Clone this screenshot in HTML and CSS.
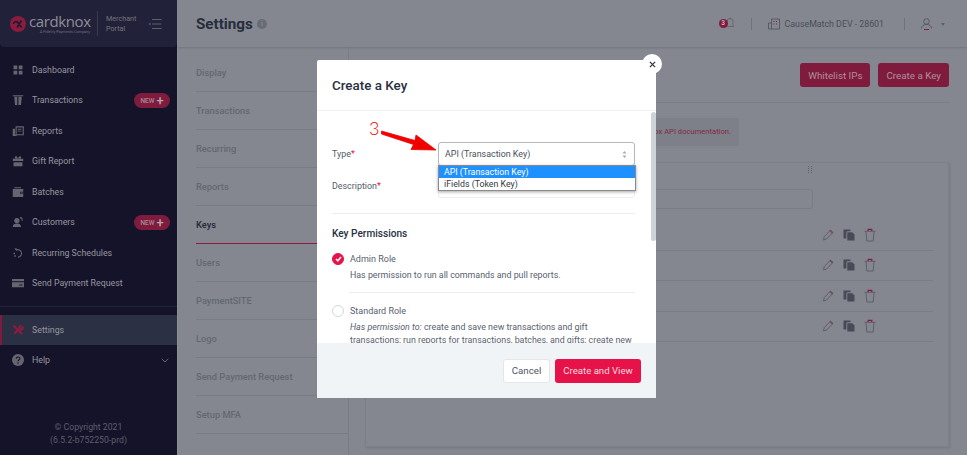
FILE: index.html
```html
<!DOCTYPE html>
<html>
<head>
  <title>Settings - Keys</title>
  <link rel="stylesheet" href="styles.css">
</head>
<body>
  <svg class="defs" width="0" height="0">
    <symbol id="pencil" viewBox="0 0 14 14">
      <path d="M2.500 12l.7-3.300 6.300-6.700 2.500 2.400-6.400 6.600z" fill="none" stroke="#5d606a" stroke-width="1"/>
      <path d="M9.500 2l2.500 2.400-1 1-2.500-2.400z" fill="#7c3048" opacity=".7"/>
    </symbol>
    <symbol id="copy" viewBox="0 0 14 14">
      <path d="M1.500 1.500h7v1.700H5.700a1.300 1.300 0 0 0-1.300 1.300v6H1.500z" fill="#474b58"/>
      <path d="M5.300 4.200h5l2.200 2.200v6.100H5.300z" fill="#474b58"/>
    </symbol>
    <symbol id="trash" viewBox="0 0 14 14">
      <path d="M1.500 3.300h11M3 3.300l.8 9.700h6.400l.8-9.700" fill="none" stroke="#5d606a" stroke-width="1"/>
      <path d="M5.200 3V1.400h3.600V3" fill="none" stroke="#8c1c3e" stroke-width="1.200"/>
    </symbol>
  </svg>

  <div class="app">
    <aside class="sidebar">
      <div class="brand">
        <span class="brand-mark">
          <svg width="16" height="16" viewBox="0 0 16 16">
            <circle cx="8" cy="8" r="8" fill="#8a1c3e"/>
            <path d="M11.500 4.500L7 11.500M3.500 8a2.400 2.400 0 0 1 4.200-1.600L11.500 11.500" fill="none" stroke="#1c1a30" stroke-width="1.700"/>
          </svg>
        </span>
        <div class="brand-name">
          <span class="brand-word">cardknox</span>
          <span class="brand-tag">A Fidelity Payments Company</span>
        </div>
        <div class="brand-portal">Merchant<br>Portal</div>
        <svg class="brand-toggle" width="14" height="12" viewBox="0 0 14 12">
          <path d="M4 1.500h9.500M4 6h9.500M4 10.500h9.500" stroke="#5f5e6e" stroke-width="1.200"/>
          <path d="M2.500 4.500L.5 6l2 1.500z" fill="#5f5e6e"/>
        </svg>
      </div>

      <nav class="nav">
        <a class="nav-item">
          <svg class="nav-icon" viewBox="0 0 16 16"><path d="M2 2h5v5H2zM9 2h5v5H9zM2 9h5v5H2zM9 9h5v5H9z" fill="#65646f"/></svg>
          Dashboard
        </a>
        <a class="nav-item">
          <svg class="nav-icon" viewBox="0 0 16 16"><path d="M1 1.500h14v1.500H1zM3 3.500h4v11H4zM8.500 3.500h4.500l-1 11H8.500z" fill="#65646f"/></svg>
          Transactions
          <span class="new-pill">NEW <b>+</b></span>
        </a>
        <a class="nav-item">
          <svg class="nav-icon" viewBox="0 0 16 16"><path d="M5.500 2.500h9.500v10.500H5.500z" fill="none" stroke="#65646f" stroke-width="1.500"/><path d="M1 5h3v8h2v1.500H1zM7.500 5h5v1.200h-5zM7.500 7.500h5v1.200h-5z" fill="#65646f"/></svg>
          Reports
        </a>
        <a class="nav-item">
          <svg class="nav-icon" viewBox="0 0 16 16"><path d="M1 5h14v3H1zM2 9.500h12V15H2zM4 4.500C3 2 5 1 6.500 2L8 4.500 9.500 2c1.500-1 3.500 0 2.500 2.500z" fill="#65646f"/></svg>
          Gift Report
        </a>
        <a class="nav-item">
          <svg class="nav-icon" viewBox="0 0 16 16"><path d="M3 1.500h9V3H3zM1 4h14v3.500h-4v3h4V14.500H1zM12 8.500h3v1.500h-3z" fill="#65646f"/></svg>
          Batches
        </a>
        <a class="nav-item">
          <svg class="nav-icon" viewBox="0 0 16 16"><circle cx="6.500" cy="6" r="3.500" fill="#65646f"/><path d="M1 14.500c0-3 2-4.500 5.500-4.500s5.500 1.500 5.500 4.500zM10 2.500l2-1.500 2 1.500v4h-1.200V3.500L12 3l-1 .6z" fill="#65646f"/></svg>
          Customers
          <span class="new-pill">NEW <b>+</b></span>
        </a>
        <a class="nav-item">
          <svg class="nav-icon" viewBox="0 0 16 16"><path d="M5.500 4A5 5 0 1 1 8 13.500" fill="none" stroke="#65646f" stroke-width="1.400"/><path d="M3 1.500l3.500.5-.5 3.500zM3 11h2v2H3zM2 7.500h2v2H2z" fill="#65646f"/></svg>
          Recurring Schedules
        </a>
        <a class="nav-item">
          <svg class="nav-icon" viewBox="0 0 16 16"><path d="M0 2.500h16v3H0zM0 7h16v6.500H0z" fill="#65646f"/><path d="M9.500 10h4.500v1.300H9.500z" fill="#15132a"/></svg>
          Send Payment Request
        </a>
      </nav>

      <div class="nav-lower">
        <a class="nav-item active">
          <svg class="nav-icon" viewBox="0 0 16 16"><path d="M3 3l10.500 10.500" stroke="#8a1c3e" stroke-width="3"/><path d="M1 2.500L2.500 1l3 3L4 5.500z" fill="#8a1c3e"/><path d="M3 13l6-6" stroke="#8a1c3e" stroke-width="3"/><path d="M8.500 5a3.500 3.500 0 0 1 5-3.500L11 4l1 1 2.500-2.500A3.500 3.500 0 0 1 10 8z" fill="#8a1c3e"/></svg>
          Settings
        </a>
        <a class="nav-item">
          <svg class="nav-icon help-icon" viewBox="0 0 16 16"><circle cx="8" cy="8" r="8" fill="#65646f"/><path d="M5.500 6.300A2.500 2.500 0 0 1 8 4c1.500 0 2.500 1 2.500 2.200 0 1.600-2.400 1.700-2.400 3.400" fill="none" stroke="#15132a" stroke-width="1.500"/><circle cx="8" cy="12" r="1" fill="#15132a"/></svg>
          Help
          <svg class="help-chevron" width="8" height="5" viewBox="0 0 8 5"><path d="M.7.7L4 4l3.300-3.300" fill="none" stroke="#65646f" stroke-width="1"/></svg>
        </a>
      </div>

      <div class="copyright">© Copyright 2021<br>(6.5.2-b752250-prd)</div>
    </aside>

    <main class="main">
      <header class="topbar">
        <h1 class="page-title">Settings</h1>
        <span class="info-dot">i</span>
        <div class="topbar-right">
          <span class="bell">
            <svg width="8" height="11" viewBox="0 0 8 11"><path d="M1 8.500V4.500a3 3 0 0 1 6 0v4l1 1H0zM3.500 1h1" fill="none" stroke="#5d606a" stroke-width=".8"/></svg>
            <span class="bell-count">3</span>
          </span>
          <span class="top-sep"></span>
          <svg class="building" width="12" height="12" viewBox="0 0 12 12"><path d="M3.500 11V1h8v10zM.5 11V5h3v6z" fill="none" stroke="#565a65" stroke-width="1"/><path d="M5.500 3h1v1h-1zM8 3h1v1H8zM5.500 5.500h1v1h-1zM8 5.500h1v1H8z" fill="#8a1c3e"/></svg>
          <span class="account">CauseMatch DEV - 28601</span>
          <span class="top-sep"></span>
          <svg class="user" width="11" height="12" viewBox="0 0 11 12"><circle cx="5.500" cy="3.500" r="2.800" fill="none" stroke="#565a65" stroke-width="1"/><path d="M.5 10.500c0-5.500 10-5.500 10 0" fill="none" stroke="#565a65" stroke-width="1"/><path d="M3 11.500h5" stroke="#8a1c3e" stroke-width="1"/></svg>
          <span class="caret"></span>
        </div>
      </header>

      <div class="content">
        <ul class="tabs">
          <li>Display</li>
          <li>Transactions</li>
          <li>Recurring</li>
          <li>Reports</li>
          <li class="current">Keys</li>
          <li>Users</li>
          <li>PaymentSITE</li>
          <li>Logo</li>
          <li>Send Payment Request</li>
          <li>Setup MFA</li>
        </ul>

        <section class="pane">
          <div class="pane-actions">
            <button class="btn-dim">Whitelist IPs</button>
            <button class="btn-dim">Create a Key</button>
          </div>
          <div class="notice">For more information about keys, please see the Cardknox API documentation.</div>
          <div class="card">
            <div class="grip"></div>
            <div class="filter"></div>
            <div class="key-row">
              <svg class="row-icon"><use href="#pencil"/></svg><svg class="row-icon"><use href="#copy"/></svg><svg class="row-icon"><use href="#trash"/></svg>
            </div>
            <div class="key-row">
              <svg class="row-icon"><use href="#pencil"/></svg><svg class="row-icon"><use href="#copy"/></svg><svg class="row-icon"><use href="#trash"/></svg>
            </div>
            <div class="key-row">
              <svg class="row-icon"><use href="#pencil"/></svg><svg class="row-icon"><use href="#copy"/></svg><svg class="row-icon"><use href="#trash"/></svg>
            </div>
            <div class="key-row">
              <svg class="row-icon"><use href="#pencil"/></svg><svg class="row-icon"><use href="#copy"/></svg><svg class="row-icon"><use href="#trash"/></svg>
            </div>
          </div>
        </section>
      </div>
    </main>
  </div>

  <div class="modal">
    <button class="modal-close">
      <svg width="7" height="7" viewBox="0 0 8 8"><path d="M1 1l6 6M7 1L1 7" stroke="#2e3a4d" stroke-width="1.500"/></svg>
    </button>
    <h2 class="modal-title">Create a Key</h2>
    <div class="modal-body">
      <div class="field">
        <label>Type<em>*</em></label>
        <div class="select">
          API (Transaction Key)
          <svg width="5" height="9" viewBox="0 0 5 9"><path d="M.5 3.500L2.500 1l2 2.500zM.5 5.500l2 2.500 2-2.500z" fill="#a5abb5"/></svg>
        </div>
      </div>
      <div class="field">
        <label>Description<em>*</em></label>
        <div class="text-input"></div>
      </div>
      <hr class="rule">
      <h3 class="perm-title">Key Permissions</h3>
      <div class="role">
        <span class="radio checked">
          <svg width="7" height="6" viewBox="0 0 7 6"><path d="M1 3l1.800 1.800L6 1" fill="none" stroke="#fff" stroke-width="1.500"/></svg>
        </span>
        <div class="role-text">
          <div class="role-name">Admin Role</div>
          <p>Has permission to run all commands and pull reports.</p>
        </div>
      </div>
      <hr class="rule rule-inset">
      <div class="role">
        <span class="radio"></span>
        <div class="role-text">
          <div class="role-name">Standard Role</div>
          <p><i>Has permission to:</i> create and save new transactions and gift transactions; run reports for transactions, batches, and gifts; create new</p>
        </div>
      </div>
    </div>
    <div class="modal-foot">
      <button class="btn-cancel">Cancel</button>
      <button class="btn-create">Create and View</button>
    </div>
    <span class="modal-scroll"></span>
  </div>

  <ul class="select-list">
    <li class="picked">API (Transaction Key)</li>
    <li>iFields (Token Key)</li>
  </ul>

  <span class="note-num">3</span>
  <svg class="note-arrow" width="60" height="24" viewBox="0 0 60 24">
    <path d="M1.500 2L35 11.500 36 6 56 21 31 20.500 33.500 15.500 1.500 5z" fill="#f00000" stroke="#f00000" stroke-width=".8" stroke-linejoin="round"/>
  </svg>
</body>
</html>
```

FILE: styles.css
```css
* { box-sizing: border-box; }
html, body { height: 100%; }
body { margin: 0; font-family: Roboto, "Liberation Sans", sans-serif; overflow: hidden; background: #84878f; }
.defs { position: absolute; }
button { font-family: inherit; cursor: pointer; }

.app { display: flex; height: 455px; }

/* sidebar */
.sidebar { width: 177px; background: #15132a; color: #9a99a3; display: flex; flex-direction: column; flex-shrink: 0; }
.brand { height: 47px; background: #22213a; border-radius: 0 0 4px 4px; display: flex; align-items: center; padding-left: 10px; }
.brand-mark { display: flex; margin-right: 3px; }
.brand-name { display: flex; flex-direction: column; width: 65px; margin-right: 3px; margin-top: 2px; }
.brand-word { font-family: "Open Sans", sans-serif; font-size: 15px; line-height: 13px; letter-spacing: -.4px; color: #8e8e99; margin-bottom: 2px; }
.brand-tag { font-size: 3.800px; line-height: 4px; color: #6f6f7c; text-align: right; margin-right: 4px; white-space: nowrap; }
.brand-portal { border-left: 1px solid #3b3a50; height: 25px; padding-left: 8px; font-size: 7.200px; line-height: 9.800px; padding-top: 3px; color: #75757f; width: 51px; }

.nav { padding-top: 7.500px; height: 259.500px; border-bottom: 1px solid #25233c; }
.nav-item { display: flex; align-items: center; height: 30.500px; font-size: 8.800px; color: #97969f; padding-left: 12px; position: relative; }
.nav-icon { width: 12px; height: 12px; margin-right: 8px; flex-shrink: 0; }
.new-pill { position: absolute; right: 7px; top: 8px; width: 36px; height: 15px; border-radius: 8px; background: #7f1b3d; color: #a98a98; font-size: 6.500px; font-weight: 500; display: flex; align-items: center; justify-content: center; gap: 2px; }
.new-pill b { font-size: 13px; line-height: 11px; font-weight: 500; color: #b9a2ac; }
.nav-lower { padding-top: 8px; }
.nav-item.active { background: #2c3045; border-left: 2px solid #7f1b3d; padding-left: 10px; height: 30px; }
.help-chevron { position: absolute; right: 8px; top: 13px; }
.copyright { margin-top: auto; padding-bottom: 8px; text-align: center; font-size: 8.700px; line-height: 13px; color: #5e5d6b; }

/* main */
.main { flex: 1; display: flex; flex-direction: column; border-left: 1px solid #8c8f97; }
.topbar { height: 47px; background: #84878f; box-shadow: 0 1px 2px rgba(60, 62, 70, .25); display: flex; align-items: center; padding-left: 18px; padding-right: 22px; }
.page-title { margin: 0; font-size: 15.200px; font-weight: 700; color: #282d3c; }
.info-dot { margin-left: 4px; width: 10px; height: 10px; border-radius: 50%; background: #686c76; color: #84878f; font-size: 7px; font-weight: 700; text-align: center; line-height: 10px; }
.topbar-right { margin-left: auto; display: flex; align-items: center; font-size: 8.800px; color: #4a4e5a; }
.bell { position: relative; width: 15px; height: 13px; display: flex; justify-content: flex-end; margin-right: 17px; }
.bell-count { position: absolute; left: 0; top: 2px; width: 9px; height: 9px; border-radius: 50%; background: #7f1b3d; color: #c5aab4; font-size: 6.500px; font-weight: 700; line-height: 9px; text-align: center; }
.top-sep { width: 1px; height: 12px; background: #70737c; }
.building { margin-left: 16px; margin-right: 5px; }
.account { margin-right: 20px; white-space: nowrap; }
.user { margin-left: 16px; }
.caret { margin-left: 9px; border: 2.500px solid transparent; border-top: 3px solid #5d606a; margin-top: 3px; }

.content { flex: 1; display: flex; padding-left: 18px; min-height: 0; }
.tabs { list-style: none; margin: 0; padding: 7px 0 0; width: 153px; border-right: 1px solid #7a7d85; font-size: 9.300px; font-weight: 500; color: #636772; flex-shrink: 0; }
.tabs li { height: 38px; line-height: 37px; border-bottom: 1px solid #797c84; }
.tabs li.current { color: #23283a; border-bottom-color: #8f1c40; }
.pane { flex: 1; padding: 16px 18px 8px 16px; display: flex; flex-direction: column; }
.pane-actions { display: flex; justify-content: flex-end; gap: 8px; padding-bottom: 15px; border-bottom: 1px solid #7a7d85; }
.btn-dim { height: 24px; padding: 0 8px; border: 0; border-radius: 3px; background: #7f1b3d; color: #b0909c; font-size: 9.800px; }
.notice { margin-top: 15px; height: 28px; width: 374px; border-radius: 3px; background: #7d8088; color: #7f2a47; font-size: 7.600px; line-height: 28px; text-align: right; padding-right: 8px; white-space: nowrap; overflow: hidden; }
.card { margin-top: 16px; flex: 1; background: #84878f; border: 1px solid #7d8088; box-shadow: 1px 1px 2px rgba(60, 62, 70, .2); padding: 3px 15px 0; }
.grip { width: 4px; height: 7px; margin-left: 427px; border-left: 1px dotted #5d606a; border-right: 1px dotted #5d606a; }
.filter { margin-top: 16px; width: 432px; height: 20px; border: 1px solid #7a7d85; border-radius: 3px; margin-bottom: 11px; }
.key-row { display: flex; justify-content: flex-end; align-items: center; gap: 7px; padding-right: 56px; height: 30.500px; border-bottom: 1px solid #7a7d85; }
.row-icon { width: 14px; height: 14px; }

/* modal, sits over the dimmed page */
.modal { position: absolute; left: 317px; top: 60px; width: 339px; height: 338px; background: #fff; border-radius: 2px 0 0 2px; display: flex; flex-direction: column; color: #4e5768; }
.modal-close { position: absolute; right: -6px; top: -6px; width: 20px; height: 20px; border-radius: 50%; border: 0; padding: 0; background: #fff; display: flex; align-items: center; justify-content: center; }
.modal-title { margin: 0; height: 51px; padding: 16px 15px 0; border-bottom: 1px solid #eef0f3; font-size: 13.400px; line-height: 20px; font-weight: 500; color: #283042; }
.modal-body { flex: 1; min-height: 0; overflow: hidden; padding: 31px 21px 0 15px; }
.field { display: flex; align-items: center; height: 24px; margin-bottom: 8px; font-size: 8.900px; color: #545c6c; }
.field label { width: 106px; }
.field em { color: #e8124a; font-style: normal; }
.select { flex: 1; height: 24px; border: 1px solid #b3b8c0; border-radius: 3px; padding: 0 7px 0 6px; display: flex; align-items: center; justify-content: space-between; color: #4a4f5c; font-size: 8.900px; }
.text-input { flex: 1; height: 24px; border: 1px solid #eceef1; border-radius: 3px; }
.rule { border: 0; border-top: 1px solid #eceef1; margin: 15px 0 0; }
.rule-inset { margin: 10px 0 0 17px; }
.perm-title { margin: 13px 0 0; font-size: 10.100px; line-height: 14px; font-weight: 500; color: #283042; }
.role { display: flex; margin-top: 12px; }
.radio { width: 12px; height: 12px; border-radius: 50%; border: 1px solid #d3d7dc; margin-right: 6px; flex-shrink: 0; }
.radio.checked { background: #e8124a; border-color: #e8124a; display: flex; align-items: center; justify-content: center; }
.role-name { font-size: 9px; line-height: 12px; color: #59616f; }
.role-text { flex: 1; }
.role-text p { margin: 4px 0 0; font-size: 8.850px; line-height: 13px; color: #59616f; }
.modal-foot { height: 55px; background: #f1f4f7; display: flex; justify-content: flex-end; align-items: center; gap: 5px; padding: 0 15px 0 0; flex-shrink: 0; }
.btn-cancel { width: 47px; height: 24px; border: 1px solid #e3e6ea; border-radius: 3px; background: #fff; color: #4e5768; font-size: 9.700px; padding: 0; }
.btn-create { width: 86px; height: 24px; border: 0; border-radius: 3px; background: #e8124a; color: #fdd; font-size: 9.600px; padding: 0; }
.modal-scroll { position: absolute; right: 0; top: 52px; width: 5px; height: 129px; border-radius: 3px; background: #ccd4d9; }

/* open dropdown of the Type select */
.select-list { position: absolute; left: 438px; top: 165px; width: 198px; margin: 0; padding: 0; list-style: none; background: #fff; border: 1px solid #8a8a8a; box-shadow: 0 1px 3px rgba(0, 0, 0, .35); font-size: 8.800px; color: #33383f; }
.select-list li { height: 12px; line-height: 12px; padding-left: 5px; }
.select-list .picked { background: #1e90ff; color: #fff; }

/* red annotation on the screenshot */
.note-num { position: absolute; left: 369px; top: 117px; font-family: Lato, sans-serif; font-weight: 300; font-size: 18px; line-height: 22px; color: #f00000; }
.note-arrow { position: absolute; left: 380px; top: 129px; }
```
